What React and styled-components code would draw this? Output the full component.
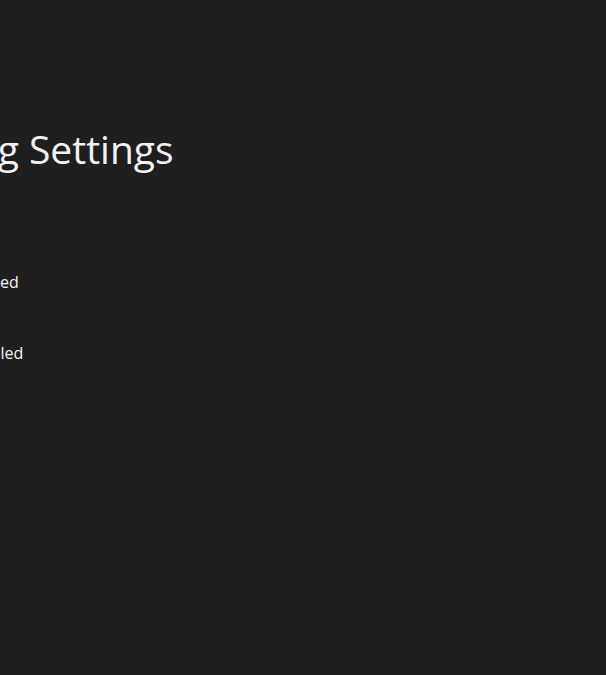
import React from 'react'
import styled, { createGlobalStyle } from 'styled-components'

const Global = createGlobalStyle`
  html, body {
    margin: 0;
    padding: 0;
    background: #1f1f1f;
    overflow: hidden;
  }
  body {
    font-family: "Open Sans", "Noto Sans", sans-serif;
    color: #f2f2f2;
  }
`

const Page = styled.div`
  width: 606px;
  height: 675px;
  background: #1f1f1f;
  overflow: hidden;
`

const Panel = styled.div`
  margin-left: -167px;
  padding-top: 123px;
  display: flex;
  flex-direction: column;
`

const Title = styled.h1`
  margin: 0;
  font-size: 39px;
  font-weight: 400;
  line-height: 52px;
  letter-spacing: 0;
  white-space: nowrap;
`

const List = styled.div`
  margin-top: 95px;
  display: grid;
  grid-template-columns: 125.5px auto;
  row-gap: 47px;
  align-items: center;
`

const Label = styled.div`
  font-size: 16px;
  line-height: 24px;
  color: #bdbdbd;
  white-space: nowrap;
  overflow: hidden;
`

const Value = styled.div`
  font-size: 16px;
  line-height: 24px;
  color: #f5f5f5;
  white-space: nowrap;
`

const settings = [
  { label: 'HDR', value: 'Enabled' },
  { label: 'Rumble', value: 'Disabled' },
]

export default function App() {
  return (
    <Page>
      <Global />
      <Panel>
        <Title>Streaming Settings</Title>
        <List>
          {settings.map((s) => (
            <React.Fragment key={s.label}>
              <Label>{s.label}</Label>
              <Value>{s.value}</Value>
            </React.Fragment>
          ))}
        </List>
      </Panel>
    </Page>
  )
}
